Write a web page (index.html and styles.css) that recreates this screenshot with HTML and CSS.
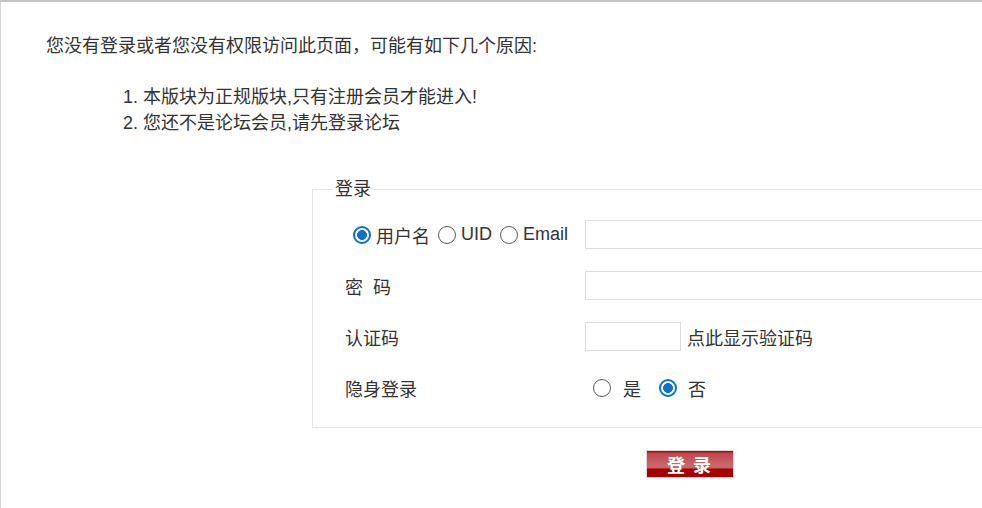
FILE: index.html
```html
<!DOCTYPE html>
<html lang="zh-CN">
<head>
<meta charset="utf-8">
<title>登录</title>
<link rel="stylesheet" href="styles.css">
</head>
<body>
<div class="frame">
  <p class="notice">您没有登录或者您没有权限访问此页面，可能有如下几个原因:</p>
  <div class="reasons">
    <div class="reason">1. 本版块为正规版块,只有注册会员才能进入!</div>
    <div class="reason">2. 您还不是论坛会员,请先登录论坛</div>
  </div>
  <form class="login-form">
    <fieldset class="box">
      <legend class="box-title">登录</legend>
      <div class="row">
        <div class="label-col">
          <label class="opt first"><input type="radio" name="lt" class="radio" checked><span>用户名</span></label>
          <label class="opt"><input type="radio" name="lt" class="radio"><span>UID</span></label>
          <label class="opt"><input type="radio" name="lt" class="radio"><span>Email</span></label>
        </div>
        <div class="val-col"><input type="text" class="text-input wide"></div>
      </div>
      <div class="row">
        <div class="label-col"><span class="lbl">密&nbsp;&nbsp;码</span></div>
        <div class="val-col"><input type="password" class="text-input wide"></div>
      </div>
      <div class="row">
        <div class="label-col"><span class="lbl">认证码</span></div>
        <div class="val-col"><input type="text" class="text-input small"><span class="hint">点此显示验证码</span></div>
      </div>
      <div class="row">
        <div class="label-col"><span class="lbl">隐身登录</span></div>
        <div class="val-col">
          <label class="yn first"><input type="radio" name="hide" class="radio"><span>是</span></label>
          <label class="yn"><input type="radio" name="hide" class="radio" checked><span>否</span></label>
        </div>
      </div>
    </fieldset>
    <div class="btn-row"><button type="button" class="submit">登 录</button></div>
  </form>
</div>
</body>
</html>
```
FILE: styles.css
```css
html, body {
  margin: 0;
  padding: 0;
  background: #fff;
}
body {
  font-family: "Liberation Sans", "Noto Sans CJK SC", sans-serif;
  font-size: 18px;
  color: #333;
}
.frame {
  box-sizing: border-box;
  height: 508px;
  border-top: 2px solid #c4c4c4;
  border-left: 1px solid #d4d4d4;
  overflow: hidden;
}
.notice {
  margin: 31px 0 0 45px;
  line-height: 26px;
}
.reasons {
  margin: 25px 0 0 122px;
}
.reason {
  line-height: 26px;
}
.login-form {
  margin: 40px 0 0 311px;
}
.box {
  width: 720px;
  margin: 0;
  padding: 7px 0 14px 0;
  border: 1px solid #e6e6e6;
}
.box-title {
  margin-left: 19px;
  padding: 0 3px;
  line-height: 26px;
}
.row {
  display: flex;
  align-items: center;
  height: 51px;
  padding-left: 32px;
}
.label-col {
  width: 240px;
  display: flex;
  align-items: center;
}
.val-col {
  display: flex;
  align-items: center;
}
.opt, .yn {
  display: flex;
  align-items: center;
}
.opt { margin-left: 8px; }
.opt .radio { margin-right: 5px; }
.yn .radio { margin-right: 12px; }
.yn.first { margin-left: 8px; }
.yn + .yn { margin-left: 18px; }
.yn + .yn .radio { margin-right: 11px; }
.radio {
  appearance: none;
  -webkit-appearance: none;
  box-sizing: border-box;
  width: 18px;
  height: 18px;
  margin: 0;
  border: 1.5px solid #5a5a5a;
  border-radius: 50%;
  background: #fff;
}
.radio:checked {
  border: 2px solid #0b6fd2;
  background: radial-gradient(circle, #0b6fd2 0, #0b6fd2 4.6px, #fff 5.2px);
}
.text-input {
  box-sizing: border-box;
  height: 29px;
  margin: 0;
  border: 1px solid #dcdcdc;
  background: #fff;
  font: inherit;
}
.wide { width: 420px; }
.small { width: 96px; }
.hint { margin-left: 6px; }
.btn-row {
  margin: 22px 0 0 334px;
}
.submit {
  box-sizing: border-box;
  width: 88px;
  height: 28px;
  border: 1px solid #dadada;
  padding: 0;
  background: linear-gradient(#a80c0c 0, #a80c0c 1px, #c0454b 2px, #c86a6d 15px, #c46468 17px, #a70000 18px, #a70000 100%);
  color: #fff;
  font-family: "Noto Sans CJK SC", sans-serif;
  font-weight: bold;
  font-size: 18px;
  letter-spacing: 2px;
  line-height: 24px;
}
```
